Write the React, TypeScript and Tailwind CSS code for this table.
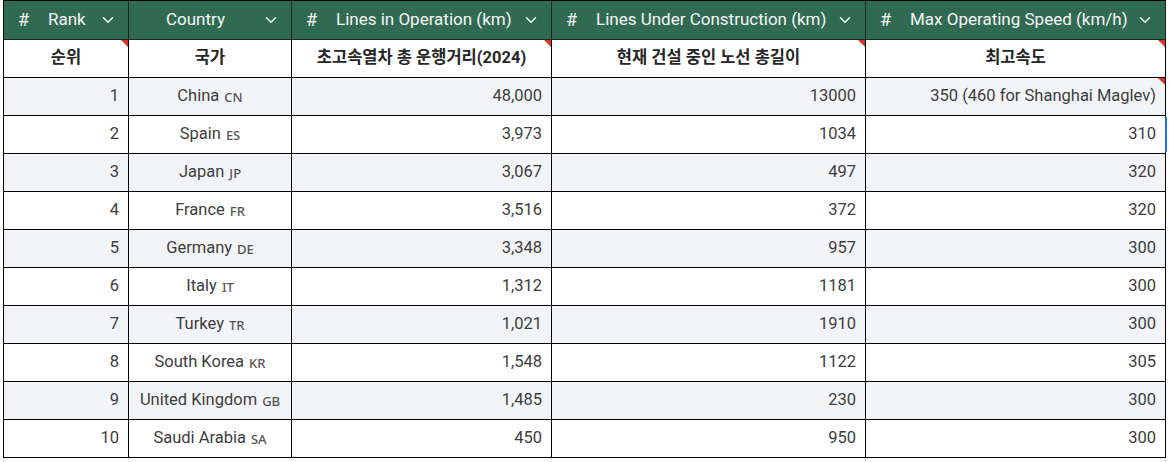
import { ChevronDown } from "lucide-react";

type Row = {
  rank: number;
  country: string;
  code: string;
  lines: string;
  building: string;
  speed: string;
};

const rows: Row[] = [
  { rank: 1, country: "China", code: "CN", lines: "48,000", building: "13000", speed: "350 (460 for Shanghai Maglev)" },
  { rank: 2, country: "Spain", code: "ES", lines: "3,973", building: "1034", speed: "310" },
  { rank: 3, country: "Japan", code: "JP", lines: "3,067", building: "497", speed: "320" },
  { rank: 4, country: "France", code: "FR", lines: "3,516", building: "372", speed: "320" },
  { rank: 5, country: "Germany", code: "DE", lines: "3,348", building: "957", speed: "300" },
  { rank: 6, country: "Italy", code: "IT", lines: "1,312", building: "1181", speed: "300" },
  { rank: 7, country: "Turkey", code: "TR", lines: "1,021", building: "1910", speed: "300" },
  { rank: 8, country: "South Korea", code: "KR", lines: "1,548", building: "1122", speed: "305" },
  { rank: 9, country: "United Kingdom", code: "GB", lines: "1,485", building: "230", speed: "300" },
  { rank: 10, country: "Saudi Arabia", code: "SA", lines: "450", building: "950", speed: "300" },
];

const grid = "grid grid-cols-[125px_163px_260px_314px_300px]";

function Flag() {
  return (
    <svg className="absolute right-0 top-0" width="7" height="7" viewBox="0 0 7 7">
      <polygon points="0,0 7,0 7,7" fill="#d9352b" />
    </svg>
  );
}

function Head({ label, hash = true }: { label: string; hash?: boolean }) {
  return (
    <div className="flex h-[39px] items-center border-r border-b border-[#1c2a23] bg-[#316a53] pl-[14px] pr-[11px] text-[17px] text-[#f4f6f5]">
      {hash ? (
        <>
          <span className="w-[13px] text-[18px] leading-none">#</span>
          <span className="ml-[17px] flex-1 whitespace-nowrap">{label}</span>
        </>
      ) : (
        <span className="flex-1 whitespace-nowrap pr-[14px] text-center">{label}</span>
      )}
      <ChevronDown size={18} strokeWidth={2} className="shrink-0" />
    </div>
  );
}

function Cell({
  children,
  align = "right",
  shade,
  flag,
}: {
  children: React.ReactNode;
  align?: "right" | "center";
  shade?: boolean;
  flag?: boolean;
}) {
  return (
    <div
      className={
        "relative flex h-[38px] items-center border-r border-b border-black px-[9px] text-[16.5px] text-[#3d3d3d] " +
        (align === "center" ? "justify-center " : "justify-end ") +
        (shade ? "bg-[#f3f4f8]" : "bg-white")
      }
    >
      {children}
      {flag && <Flag />}
    </div>
  );
}

function Sub({ children, flag }: { children: React.ReactNode; flag?: boolean }) {
  return (
    <div className="relative flex h-[38px] items-center justify-center border-r border-b border-black bg-white text-[16.5px] font-bold text-[#262626]">
      {children}
      {flag && <Flag />}
    </div>
  );
}

export default function App() {
  return (
    <div
      className="h-[462px] w-[1169px] overflow-hidden bg-white pl-[3px]"
      style={{ fontFamily: 'Roboto, "Noto Sans CJK KR", sans-serif' }}
    >
      <div className={grid + " w-fit border-l border-t border-black"}>
        <Head label="Rank" />
        <Head label="Country" hash={false} />
        <Head label="Lines in Operation (km)" />
        <Head label="Lines Under Construction (km)" />
        <Head label="Max Operating Speed (km/h)" />

        <Sub flag>순위</Sub>
        <Sub>국가</Sub>
        <Sub flag>초고속열차 총 운행거리(2024)</Sub>
        <Sub flag>현재 건설 중인 노선 총길이</Sub>
        <Sub flag>최고속도</Sub>

        {rows.map((r, i) => {
          const shade = i % 2 === 0;
          return [
            <Cell key={r.rank + "a"} shade={shade}>{r.rank}</Cell>,
            <Cell key={r.rank + "b"} shade={shade} align="center">
              <span>{r.country}</span>
              <span
                className="ml-[5px] mt-[3px] text-[13px] font-medium text-[#555]"
                style={{ fontFamily: '"Noto Sans", sans-serif' }}
              >
                {r.code}
              </span>
            </Cell>,
            <Cell key={r.rank + "c"} shade={shade}>{r.lines}</Cell>,
            <Cell key={r.rank + "d"} shade={shade}>{r.building}</Cell>,
            <Cell key={r.rank + "e"} shade={shade} flag={i === 0}>
              {r.speed}
              {i === 1 && <span className="absolute -right-[2px] top-[1px] h-[35px] w-[2px] bg-[#1a73e8]" />}
            </Cell>,
          ];
        })}
      </div>
      <div className={grid + " h-[6px] w-fit border-l border-[#e2e2e2]"}>
        {[0, 1, 2, 3, 4].map((k) => (
          <div key={k} className="border-r border-[#e2e2e2]" />
        ))}
      </div>
    </div>
  );
}
